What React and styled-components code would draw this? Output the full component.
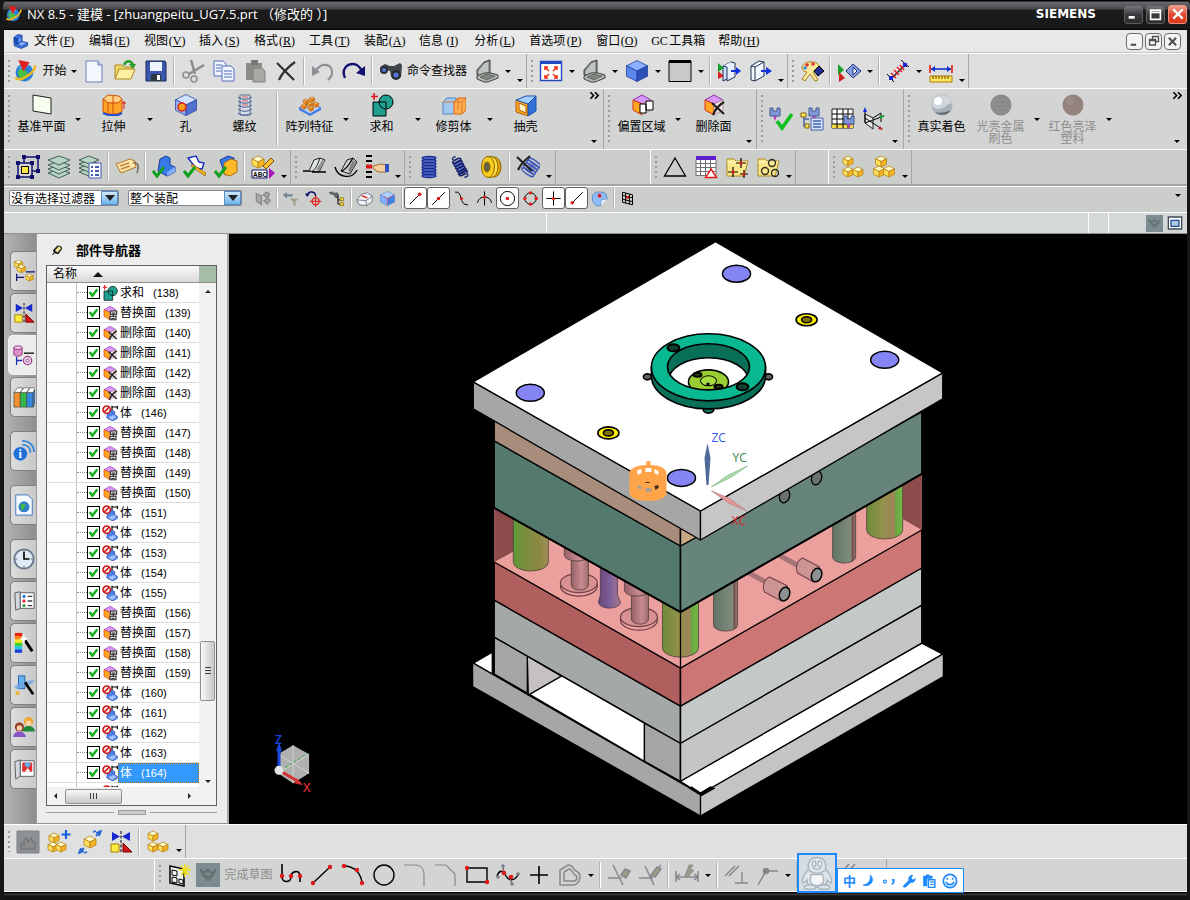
import { useState } from 'react'
import styled, { createGlobalStyle } from 'styled-components'

const C = {
  black:'#000000', frame:'#161616', menu:'#e8e8e8', bar:'#dedede', barMid:'#d3d4d4', barLow:'#cccecc',
  line:'#a6a6a6', light:'#ffffff', muted:'#8e8e8e', panel:'#ececec', select:'#3399ff', blue:'#1e88ff',
  red:'#e01818', navy:'#10106e',
}

const GlobalStyle = createGlobalStyle`
  * { box-sizing:border-box; }
  body { margin:0; background:${C.black}; }
  button, select, input { font:inherit; color:inherit; }
`

const Window = styled.div`
  height:100vh; min-height:640px; display:flex; flex-direction:column; position:relative; overflow:hidden;
  padding:0 3px 0 4px; background:${C.frame};
  font:12px/16px 'Liberation Sans','Noto Sans CJK SC',sans-serif; color:${C.black};
`

/* ---------- title and menu ---------- */

const TitleBar = styled.header`
  height:30px; flex:none; display:flex; align-items:center; gap:4px; padding:0 1px 2px 2px; margin:0 -3px 0 -1px;
  background:linear-gradient(#000 0 1px, #6a6a6e 2px, #48484c 9px, #1c1c1c 10px, #181818 28px, #000 30px);
  color:${C.light}; border-radius:6px 6px 0 0;
`
const Title = styled.h1`
  margin:0; flex:1; font:13px/18px 'Open Sans','Noto Sans CJK SC',sans-serif; white-space:pre;
`
const Brand = styled.div`
  font:700 12px/16px 'DejaVu Sans',sans-serif; margin-right:24px;
`
const WinButton = styled.button`
  width:19px; height:19px; padding:0; display:grid; place-items:center; margin-right:-1px;
  border:1px solid ${p => p.$close ? '#f09080' : '#5c5c60'}; border-radius:3px;
  background:${p => p.$close ? 'linear-gradient(#f0a090,#e04a30 50%,#d83818)' : 'linear-gradient(#77777b,#3c3c40 50%,#2c2c2e)'};
`
const WinButtons = styled.div`display:flex; gap:4px; padding-right:3px;`

const MenuBar = styled.nav`
  height:23px; flex:none; display:flex; align-items:center; gap:13px; padding:0 6px 0 8px; background:${C.menu};
  border-bottom:1px solid #c4c4c4;
`
const MenuItem = styled.button`
  border:0; background:none; padding:0; white-space:pre; line-height:16px;
`
const Mnemonic = styled.span`
  display:inline-block; width:18px; text-align:center; font-family:'Liberation Serif',serif;
`
const MenuLogo = styled.span`display:flex; align-items:center; margin-right:-8px;`
const MdiButtons = styled.div`display:flex; gap:2px; margin-left:auto;`
const MdiButton = styled.button`
  width:17px; height:17px; padding:0; display:grid; place-items:center;
  border:1px solid #6c6c6c; border-radius:4px; background:#f4f4f4;
`

/* ---------- toolbars ---------- */

const Bar = styled.div`
  height:${p => p.$h}px; flex:none; display:${p => p.$cols ? 'grid' : 'flex'}; grid-template-columns:${p => p.$cols};
  background:${p => p.$bg}; border-top:1px solid ${C.light};
  border-bottom:${p => p.$rule ? '2px solid #a4a4a4' : '0'};
`
const Group = styled.div`
  display:flex; align-items:stretch; position:relative; min-width:0; margin-left:${p => p.$gap || 0}px;
  border-right:1px solid ${p => p.$open ? 'transparent' : C.line};
  border-left:${p => p.$gap ? '1px solid #fff' : '0'};
`
const Grip = styled.i`
  width:8px; flex:none; margin:6px 0;
  background:repeating-linear-gradient(#9c9c9c 0 2px, transparent 2px 5px) 4px 0 / 2px 100% no-repeat;
`
const Sep = styled.i`
  width:6px; flex:none; margin:3px 0;
  background:linear-gradient(90deg, #b4b4b4 0 1px, #fff 1px 3px) 2px 0 / 2px 100% no-repeat;
`
const Tool = styled.button`
  width:${p => p.$w || 31}px; flex:none; padding:0; border:0; background:none;
  display:flex; align-items:center; justify-content:center; gap:4px; white-space:nowrap;
  color:${p => p.disabled ? C.muted : C.black};
`
const BigTool = styled.button`
  width:59px; flex:none; padding:4px 0 0; border:0; background:none;
  display:flex; flex-direction:column; align-items:center; gap:4px; line-height:12px;
  color:${p => p.disabled ? C.muted : C.black};
`
const BigLabel = styled.span`width:50px; text-align:center;`
const Caret = styled.button`
  width:${p => p.$w || 12}px; flex:none; padding:${p => p.$low ? '0 0 6px' : '0'}; border:0; background:none;
  display:flex; align-items:${p => p.$low ? 'flex-end' : 'center'}; justify-content:center;
  &::after { content:''; border:3px solid transparent; border-top-color:#000; border-bottom:0; }
`
const Overflow = styled.div`
  width:18px; margin-left:auto; display:flex; flex-direction:column; justify-content:space-between; align-items:center;
  padding-top:1px;
`

const FilterBar = styled(Bar)`align-items:center; padding:0 0 3px 5px;`
const Toggle = styled.button`
  width:23px; height:22px; flex:none; padding:0; display:grid; place-items:center;
  border:1px solid ${p => p.$on ? '#606060' : 'transparent'}; border-radius:3px;
  background:${p => p.$on ? '#fff' : 'none'};
`
const FilterSep = styled(Sep)`width:5px; height:21px; margin:0;`
const SelectBox = styled.label`
  display:grid; grid-template-columns:1fr 17px; width:${p => p.$w}px; height:16px; margin-right:9px;
  border:1px solid #7c8694; border-radius:2px; background:#fff;
`
const Select = styled.select`
  grid-area:1 / 1 / 2 / 3; min-width:0; appearance:none; border:0; background:none; padding:0 17px 0 1px;
  font:12px/14px 'Noto Sans CJK SC',sans-serif; overflow:hidden;
`
const SelectArrow = styled.span`
  grid-area:1 / 2; display:grid; place-items:center; pointer-events:none;
  background:linear-gradient(#cfe8fb,#6cb4ee); border:1px solid #5c8cc0;
  &::after { content:''; border:5px solid transparent; border-top:6px solid #222; border-bottom:0; }
`
const CueLine = styled.div`
  height:22px; flex:none; display:flex; align-items:stretch; background:#d4d8d8;
  border-top:1px solid #fff; border-bottom:1px solid #909090;
`
const Cue = styled.div`flex:${p => p.$flex}; border-right:1px solid #fff;`
const CueIcons = styled.div`width:78px; display:flex; align-items:center; justify-content:flex-end; gap:4px; padding-right:4px;`

/* ---------- work area ---------- */

const Main = styled.main`flex:1; min-height:0; display:flex; background:#000;`
const Resources = styled.aside`
  width:33px; flex:none; padding-top:17px; display:flex; flex-direction:column; align-items:flex-end; gap:2px;
  background:linear-gradient(90deg,#b4b4b4,#8e8e8e); overflow:hidden; border-right:1px solid #999;
`
const ResourceTab = styled.button`
  width:${p => p.$active ? 29 : 27}px; height:40px; flex:none; padding:0; display:grid; place-items:center;
  margin-top:${p => p.$first ? 12 : 0}px; margin-right:-1px;
  border:1px solid ${p => p.$active ? '#f4f4f4' : '#808080'}; border-right:0; border-radius:5px 0 0 5px;
  background:${p => p.$active ? '#ececec' : 'linear-gradient(90deg,#dcdcdc,#c8c8c8)'};
`
const Navigator = styled.section`
  width:192px; flex:none; display:flex; flex-direction:column; background:${C.panel};
  padding:0 10px 8px 9px; border-right:2px solid #a8a8a8; border-bottom:1px solid #909090;
`
const NavTitle = styled.h2`
  margin:0; height:31px; flex:none; display:flex; align-items:center; gap:13px; padding-left:5px;
  font:700 13px/16px 'Noto Sans CJK SC',sans-serif;
`
const TreeBox = styled.div`
  flex:1; min-height:0; display:grid; grid-template:17px minmax(0, 1fr) 18px / minmax(0, 1fr) 17px;
  border:1px solid #606060; background:#fff;
`
const TreeHead = styled.div`
  display:flex; align-items:center; gap:16px; padding-left:6px; background:linear-gradient(#fafafa,#d8d8d8);
  border-bottom:1px solid #909090;
`
const SortArrow = styled.i`border:5px solid transparent; border-bottom-color:#111; border-top:0;`
const HeadCorner = styled.div`background:#a6bca6; border-bottom:1px solid #909090;`
const Rows = styled.ul`
  margin:0; padding:0; list-style:none; overflow:hidden;
  background:linear-gradient(90deg, transparent 29px, #c0c0c0 29px 30px, transparent 30px);
`
const Row = styled.li`
  height:20px; display:flex; align-items:center; padding-left:30px; border-bottom:1px solid #dcdcdc;
`
const LastRow = styled(Row)`padding-left:55px;`
const Stub = styled.i`width:10px; border-top:1px dotted #909090;`
const RowLabel = styled.label`flex:1; display:flex; align-items:center; gap:2px; min-width:0;`
const CheckCell = styled.span`
  display:grid; width:13px; height:13px;
  > * { grid-area:1 / 1; }
  > svg { pointer-events:none; }
`
const Check = styled.input`
  appearance:none; margin:0; width:13px; height:13px; border:1px solid #000; background:#fff;
`
const RowText = styled.span`
  flex:1; display:flex; align-items:center; height:20px; padding-left:2px; margin-left:-2px; white-space:pre;
  color:${p => p.$on ? '#fff' : '#000'}; background:${p => p.$on ? C.select : 'none'};
  outline:${p => p.$on ? '1px dotted #c07010' : '0'}; outline-offset:-1px;
`
const RowNumber = styled.span`font-size:11px; margin-left:9px;`
const VScroll = styled.div`
  background:#f2f2f2; display:flex; flex-direction:column; align-items:center; padding:7px 0 4px;
`
const HScroll = styled.div`
  grid-column:1 / 3; background:#f2f2f2; display:flex; align-items:center; padding:0 25px 0 7px;
`
const Arrow = styled.i`
  border:3px solid transparent;
  ${p => ({
    up:'border-bottom-color:#222; border-top:0;',
    down:'border-top-color:#222; border-bottom:0;',
    left:'border-right-color:#222; border-left:0;',
    right:'border-left-color:#222; border-right:0;',
  }[p.$to])}
`
const Thumb = styled.div`
  border:1px solid #909090; border-radius:2px; display:grid; place-items:center; flex:none;
  background:linear-gradient(${p => p.$v ? '90deg,' : ''}#f8f8f8,#c8c8c8);
  width:${p => p.$v ? 15 : 57}px; height:${p => p.$v ? 60 : 15}px;
  &::after {
    content:''; width:${p => p.$v ? 6 : 8}px; height:${p => p.$v ? 8 : 6}px;
    background:repeating-linear-gradient(${p => p.$v ? '180deg' : '90deg'}, #404040 0 1px, transparent 1px 3px);
  }
`
const Space = styled.i`flex:${p => p.$n};`
const Splitter = styled.div`
  flex:none; height:9px; display:flex; align-items:flex-end; gap:4px;
  &::before, &::after { content:''; flex:3; border-bottom:1px solid #a0a0a0; margin-bottom:2px; }
`
const SplitterKnob = styled.i`width:28px; height:5px; background:#ccc; border:1px solid #999;`
const Viewport = styled.section`flex:1; min-width:0; background:#000; display:flex;`
const Scene = styled.svg`width:100%; height:100%; display:block;`

const Ime = styled.div`
  position:absolute; left:797px; bottom:7px; display:flex; align-items:flex-end; color:${C.blue};
`
const ImeAvatar = styled.div`
  width:40px; height:40px; border:2px solid ${C.blue}; background:#d6dde2; display:grid; place-items:center;
`
const ImeBar = styled.div`
  width:127px; height:25px; border:1px solid ${C.blue}; background:#fff;
  display:flex; align-items:center; justify-content:space-around; padding:0 2px;
  font:700 13px/16px 'Noto Sans CJK SC',sans-serif;
`

/* ---------- icons, all on a 24 x 24 grid ---------- */

const Cube = ({ x, y, s, c = ['#fffbc8', '#ffe05c', '#f4b424'], line = '#b88418' }) => (
  <g stroke={line} strokeWidth="0.8" strokeLinejoin="round">
    <path fill={c[0]} d={`M${x} ${y}l${s} ${s / 2}l${-s} ${s / 2}l${-s} ${-s / 2}z`} />
    <path fill={c[1]} d={`M${x - s} ${y + s / 2}l${s} ${s / 2}v${s}l${-s} ${-s / 2}z`} />
    <path fill={c[2]} d={`M${x + s} ${y + s / 2}l${-s} ${s / 2}v${s}l${s} ${-s / 2}z`} />
  </g>
)

const Dots = ({ at, r = 1.8, fill = C.red }) => at.map(([x, y]) => <circle key={`${x}-${y}`} cx={x} cy={y} r={r} fill={fill} />)
const Tick = <path d="M1 16l4 5 7-9" fill="none" stroke="#10a020" strokeWidth="3" />
const Laptop = (
  <g stroke="#404440" strokeLinejoin="round">
    <path d="M2 16V11l7-8 6-2v13l-7 4z" fill="#a8aca8" />
    <path d="M9 4l5-2v11l-6 3-5 0v-4z" fill="#c0c4c0" strokeWidth="0.600" />
    <path d="M2 17l7-3h7l7 2v3l-10 4H9l-7-3z" fill="#b4b6b4" />
    <path d="M5 18l6-3 9 2-8 4z" fill="#80847f" strokeWidth="0.500" />
  </g>
)
const FaceBox = (
  <g strokeLinejoin="round">
    <path d="M3 7l9-5 9 5-9 4z" fill="#d898f8" stroke="#9030b0" />
    <path d="M3 7l9 4v11l-9-5z" fill="#ffa820" stroke="#e03018" />
    <path d="M21 7l-9 4v11l9-5z" fill="#f4e8e0" stroke="#b890a0" />
  </g>
)
const Books = ['#f09030', '#30b848', '#3888e0']
const Globe = (
  <g>
    <circle cx="11" cy="13" r="8.5" fill="#2a80d8" /><path d="M5 11c4-4 6 0 8 1s1 6-3 8c-4-1-6-5-5-9z" fill="#48c048" />
    <path d="M6 9c2-3 6-4 9-2-3 0-6 1-9 2z" fill="#b8e4ff" />
    <path d="M2 18c6 5 20-6 19-12" fill="none" stroke="#f0b820" strokeWidth="2.4" />
    <path d="M5 1l11 2-6 9z" fill="#e02020" />
  </g>
)
const Folder = (
  <g stroke="#b08820" strokeLinejoin="round">
    <path d="M2 20V6h7l2 2h8v3" fill="#f0d868" /><path d="M2 20l4-10h16l-4 10z" fill="#fff0a0" />
  </g>
)
const PinFolder = (
  <g stroke="#b08820" strokeLinejoin="round">
    <path d="M2 21V4h7l2 2h12l-4 15z" fill="#fbe88c" /><path d="M2 7h20" stroke="#fff8c8" />
  </g>
)
const Mirror = (
  <g>
    <path d="M3 2v9l8-4.500zM21 2v9l-8-4.500z" fill="#1828d0" /><path d="M12 1v22" stroke="#000" strokeDasharray="3 1.500" />
    <path d="M2 14h8v8H2z" fill="#ffec40" stroke="#a08000" /><path d="M14 13l9 9h-9z" fill="#d81818" stroke="#700" />
  </g>
)
const Gray = ({ children }) => <g opacity="0.55" fill="none" stroke="#504850" strokeWidth="1.500">{children}</g>
const Line = ({ d, c = '#000', w = 1.4 }) => <path d={d} fill="none" stroke={c} strokeWidth={w} />
const Plug = ({ x, y }) => (
  <g><path d={`M${x} ${y}h3v3h4v-3h3v8h-10z`} fill="#8098d8" stroke="#405890" /><path d={`M${x + 3} ${y + 8}h4l-2 5z`} fill="#b040c0" /></g>
)

const ICONS = {
  nx: Globe,
  part: <g stroke="#123c98" strokeLinejoin="round"><path d="M3 6l5-4 6 1v9l8 2v4l-9 4-10-4z" fill="#3c74e0" /><path d="M3 6l5 2v8l-5-2z" fill="#2050b8" /><path d="M8 8l6-4v8l-6 4z" fill="#5c90f4" /><path d="M8 16l6-4 8 2-9 5z" fill="#8cb4ff" /></g>,
  new: <g><path d="M4 2h12l4 4v17H4z" fill="#f4f6ff" stroke="#6880b8" /><path d="M16 2v4h4" fill="#c8d4f0" stroke="#6880b8" /></g>,
  open: <g>{Folder}<path d="M11 6c2-5 7-5 9 0" fill="none" stroke="#28a028" strokeWidth="2.500" /><path d="M16 5h7l-3 5z" fill="#28a028" /></g>,
  save: <g><path d="M2 2h19l1 2v18H2z" fill="#3858b0" stroke="#182858" /><path d="M6 3h12v9H6z" fill="#f0f4ff" /><path d="M7 15h10v7H7z" fill="#303840" /><path d="M13 16h3v5h-3z" fill="#fff" /></g>,
  cut: <Gray><path d="M10 1l4 14M23 6L8 15" strokeWidth="2.500" /><circle cx="5" cy="16" r="3" /><circle cx="13" cy="20" r="3" /></Gray>,
  copy: <g fill="#f0f4ff" stroke="#5070b8"><path d="M2 2h9l3 3v12H2z" /><path d="M10 7h9l3 3v12H10z" /><path d="M4 6h6M4 9h5M4 12h5M12 12h8M12 15h8M12 18h8" /></g>,
  paste: <g><path d="M3 4h16v17H3z" fill="#8c8c88" /><path d="M8 1h7v5H8z" fill="#787874" /><path d="M10 9h9l3 3v11H10z" fill="#a8a8a4" stroke="#80807c" /></g>,
  del: <Line d="M3 4l17 17M21 3C14 8 8 14 5 21" c="#303030" w={2.2} />,
  undo: <g><Line d="M5 12c4-9 17-8 16 2 0 3-2 5-4 7" c="#8c9094" w={2.2} /><path d="M1 7v10l8-4z" fill="#8c9094" /></g>,
  redo: <g><Line d="M3 19C-1 10 5 5 11 5c5 0 8 5 9 8" c={C.navy} w={2.4} /><path d="M23 7v10l-9-3z" fill={C.navy} /></g>,
  find: <g><path d="M1 8l5-3 5 2h4l6-3 2 2-1 12-5 3-5-4-1-5-4-1-3 2z" fill="#404448" /><circle cx="5" cy="11" r="4" fill="#282c34" /><circle cx="17" cy="16" r="5" fill="#282c34" /><circle cx="5" cy="11" r="2" fill="#5878e0" /><circle cx="17" cy="16" r="2.500" fill="#5878e0" /></g>,
  laptop: Laptop,
  fit: <g><path d="M1.500 2.500h21v19h-21z" fill="#fff" stroke="#2048c0" strokeWidth="1.400" /><path d="M1 2h22v3H1z" fill="#2048c0" /><Line d="M6 11V8h3M6 8l4 4M18 11V8h-3M18 8l-4 4M6 16v3h3M6 19l4-4M18 16v3h-3M18 19l-4-4" c="#f03010" w={1.6} /></g>,
  cube: <Cube x={12} y={1.5} s={10.5} c={['#8cb0ff', '#5c88ec', '#2c50b8']} line="#2040a0" />,
  pane: <g><path d="M1 2h22v20.500H1z" fill="#c8cac8" stroke="#000" /><path d="M1 1h22v3H1z" fill="#000" /></g>,
  clipWork: <g><path d="M6 7l8-4v15l-8 4z" fill="#c8e0ff" stroke="#203050" /><path d="M6 7l4 1v14l8-4V4l-4-1" fill="#e8f0ff" stroke="#203050" /><Line d="M14 12h6" c="#1030e0" w={2} /><path d="M19 8l5 4-5 4z" fill="#1030e0" /><path d="M1 4l6 5-6 4z" fill="#18a030" /><path d="M1 12l6 5-6 3z" fill="#d02020" /></g>,
  clip: <g><path d="M3 7l8-5 5 1v14l-9 5-4-1z" fill="#f4f8ff" stroke="#203050" /><path d="M7 8l9-5M7 8v14M3 7l4 1" fill="none" stroke="#203050" /><Line d="M13 12h6" c="#1030e0" w={2} /><path d="M18 8l6 4-6 4z" fill="#1030e0" /></g>,
  palette: <g><path d="M2 9C2 2 17 0 20 8c1 4-5 4-7 5l5 8-3 1-5-7-5 7-3-2 5-7c-3 0-5-2-5-4z" fill="#fce89c" stroke="#a88020" /><Dots at={[[7, 6], [13, 5]]} fill="#e03030" /><Dots at={[[5, 9]]} fill="#3090e0" /><path d="M19 7l5 5-6 5-4-5z" fill="#203090" stroke="#000" /></g>,
  showHide: <g><path d="M1 5l6 6-6 5z" fill="#18a030" /><path d="M2 13l6 6-6 4z" fill="#d02020" /><path d="M16 5l8 7-8 7-7-7z" fill="#88a0e0" stroke="#203080" /><path d="M16 8l4 4-4 4z" fill="#fff" stroke="#203080" /></g>,
  measure: <g><Line d="M6 19L19 6" c="#202020" /><Line d="M8 11l5 5M11 8l5 5M14 6l4 5M5 14l5 5" c="#e01818" /><path d="M15 1l8 7M1 15l7 8" stroke="#000" /><path d="M17 4h4v4h-4zM3 17h4v4H3z" fill="#1828d0" /></g>,
  ruler: <g><Line d="M1 6v8M23 6v8" c="#e01818" w={1.6} /><Line d="M2 10h20" c="#1030d0" w={1.6} /><path d="M2 10l4-3v6zM22 10l-4-3v6z" fill="#1030d0" /><path d="M1 17h22v6H1z" fill="#ffe860" stroke="#b07800" /><path d="M4 17v3M7 17v3M10 17v3M13 17v3M16 17v3M19 17v3" stroke="#604000" /></g>,

  datum: <path d="M3 2l18 3v16L3 18z" fill="#f8fff0" stroke="#202020" />,
  extrude: <g stroke="#d05008"><path d="M1 6l5-4 11 1 3 3-4 4H6z" fill="#ffd080" /><path d="M1 6l5 4h10l4-4v13l-5 2H6l-5-2z" fill="#ffa428" /><path d="M1 20l5 2h10l4-2" fill="none" stroke="#2050d0" strokeWidth="2" /><path d="M6 10v11M11 3v17" /><path d="M22 8v8M20 10h4" stroke="#e01010" /></g>,
  hole: <g><Cube x={12} y={1.5} s={10.5} c={['#d0e0ff', '#98b0f8', '#5070d0']} line="#3048a0" /><circle cx="8" cy="14" r="4" fill="#ffa020" stroke="#e02010" strokeWidth="1.500" /></g>,
  thread: <g><path d="M7 2h10v20H7z" fill="#d8dce4" stroke="#607090" /><path d="M5 4c4 3 10 3 14 0M5 8c4 3 10 3 14 0M5 12c4 3 10 3 14 0M5 16c4 3 10 3 14 0M5 20c4 3 10 3 14 0" fill="none" stroke="#405898" /><path d="M9 4h6M9 8h6M9 12h6" stroke="#d06060" /></g>,
  pattern: <g><path d="M1 15l11-5 11 5-11 6z" fill="#b8d4ff" stroke="#3060d0" /><path d="M1 15v2l11 6 11-6v-2l-11 6z" fill="#4080e8" />{[[8, 6], [14, 4], [6, 11], [12, 9], [18, 9], [13, 13]].map(([x, y]) => <Cube key={`${x}${y}`} x={x} y={y} s={2.6} c={['#ffd080', '#ffa430', '#e08018']} line="#c87018" />)}</g>,
  unite: <g><path d="M3 9h13v14H3z" fill="#20a090" stroke="#000" /><circle cx="16" cy="9" r="7" fill="#20a090" stroke="#000" /><path d="M9 9h7v7" fill="none" stroke="#000" /><Line d="M4 0v7M1 3.500h7" c="#e01818" w={1.6} /></g>,
  trim: <g><path d="M1 9l4-4h9v13l-3 3H1z" fill="#a0c8f0" stroke="#5080c0" /><path d="M12 9l4-4h8v12l-4 4h-8z" fill="#ffb050" stroke="#e06010" /><path d="M1 9h19v12M20 9l4-4M16 5v12" fill="none" stroke="#e07830" /></g>,
  shell: <g stroke="#b06008"><path d="M2 7l12 4v12L2 19z" fill="#ffa820" /><path d="M2 7l10-4 10 0-8 8z" fill="#a0d0ff" stroke="#2050a8" /><path d="M14 11l8-8v15l-8 5z" fill="#3070d8" stroke="#2050a8" /><path d="M5 10l7 3v7l-7-3z" fill="#fff0c0" /></g>,
  offset: <g>{FaceBox}<path d="M10 11h6v9h-6zM16 8h7v9h-7z" fill="#fff" stroke="#000" /></g>,
  delFace: <g>{FaceBox}<Line d="M10 10l12 11M22 9C17 12 13 17 11 22" c="#202020" w={2.2} /></g>,
  replace: <g>{FaceBox}<path d="M13 9h9v5h-9zM12 17h9v5h-9z" fill="#fff" stroke="#202020" strokeWidth="1.600" /><Line d="M15 12h5M14 20h5M17 14v3" w={1.4} /></g>,
  body: <g><path d="M9 12l6-4 4 2v5l4 2v3l-7 4-9-5z" fill="#4c80e8" stroke="#1838a0" /><path d="M9 18l9-3 4 3-7 5z" fill="#a0c0ff" /><Line d="M15 1v7M23 1v5M15 3h8" w={1.8} /><circle cx="7" cy="7" r="5.500" fill="#fff" stroke="#d01818" strokeWidth="2.400" /><Line d="M3 11l8-8" c="#d01818" w={2.4} /></g>,
  plugOk: <g><Plug x={1} y={1} /><Line d="M8 14l5 7 10-14" c="#10c020" w={3.6} /></g>,
  plugTree: <g><Plug x={9} y={1} /><path d="M11 11h12v12H11z" fill="#d8e4ff" stroke="#4060a8" /><Line d="M13 14h8M13 17h8M13 20h8M4 9v11M4 12h5M4 19h5" c="#4060a8" /><path d="M1 6h5v4H1zM5 17h4v4H5z" fill="#ffe860" stroke="#806000" /></g>,
  plugTable: <g><path d="M1 2h21v19H1z" fill="#fff" stroke="#202020" /><path d="M1 17h21v4H1z" fill="#f8d840" /><Line d="M1 7h21M1 12h21M1 17h21M6 2v19M12 2v19M17 2v19" w={1} /><g transform="translate(0 -1)"><Plug x={13} y={10} /></g></g>,
  csys: <g><path d="M3 7l8 4v11l-8-6z" fill="#e8e8e8" stroke="#202020" /><Line d="M3 16V2M3 16l19-7M3 11l17 11M11 11l8-5v9" w={1} /><path d="M3 0l-2 5h4z" fill="#1030e0" /><path d="M23 8l-6 1 2 3z" fill="#18a030" /><path d="M21 23l-5-1 2-3z" fill="#d02020" /></g>,
  silver: <g><circle cx="12" cy="12" r="10.500" fill="#a8b0b8" /><path d="M2 12c1-13 18-13 20-2-5 1-8 6-14 6-3 0-5-2-6-4z" fill="#d0d6dc" /><circle cx="8" cy="8" r="4" fill="#fff" /><path d="M5 19c4 4 12 4 16-2-4 2-11 4-16 2z" fill="#606870" /></g>,
  metal: <g><circle cx="12" cy="12" r="10.500" fill="#8c8a88" /><path d="M4 7h16M3 11h18M3 15h18M6 19h12" stroke="#949290" /></g>,
  plastic: <g><circle cx="12" cy="12" r="10.500" fill="#94827f" /><circle cx="9" cy="8" r="4" fill="#9c8c89" /></g>,

  select: <g><path d="M8 2h14v14H8z" fill="none" stroke={C.navy} strokeWidth="1.500" /><path d="M2 8h14v14H2z" fill="#d4d4d4" stroke={C.navy} strokeWidth="1.500" /><path d="M5.500 11.500h7v7h-7z" fill="#ffe840" stroke="#000" /><path d="M6 0h4v4H6zM20 0h4v4h-4zM20 14h4v4h-4zM0 6h4v4H0zM0 20h4v4H0zM14 20h4v4h-4zM14 6h4v4h-4z" fill={C.navy} /></g>,
  layers: <g fill="#b8d4c4" stroke="#406058">{[16, 12, 8, 3].map(y => <path key={y} d={`M1 ${y + 2}l11-4 11 4-11 5z`} />)}</g>,
  layerList: <g><g fill="#b8d4c4" stroke="#406058">{[15, 11, 7, 3].map(y => <path key={y} d={`M1 ${y + 2}l10-4 10 4-10 4z`} />)}</g><path d="M11 8h12v15H11z" fill="#fff" stroke="#4058b8" /><Line d="M13 12h2M13 16h2M13 20h2M17 12h4M17 16h4M17 20h4" c="#4058b8" w={2} /></g>,
  tag: <g><path d="M1 9l14-5 5 2 1 6-15 6z" fill="#fce4a8" stroke="#b07828" /><Line d="M5 11l9-3M6 14l9-3" c="#c08840" /><Line d="M18 8c6-1 6 4 4 10" c="#706050" /></g>,
  asmPart: <g><path d="M8 4l6-3 4 2v7l5 2v5l-8 4-9-5z" fill="#3878e8" stroke="#183c98" /><path d="M15 17l8-5v5l-8 4z" fill="#80b0ff" />{Tick}</g>,
  asmPen: <g><path d="M5 3l8-2 3 6 5 1-2 6-6-1z" fill="#fff" stroke="#2030c0" strokeWidth="1.500" /><path d="M9 9l14 9-1 3-14-10z" fill="#f8b020" stroke="#805000" strokeWidth="0.600" />{Tick}</g>,
  asmBox: <g><path d="M6 5l8-4 6 2-1 14-8 3z" fill="#3878e8" stroke="#183c98" /><path d="M10 8l7-4 6 2v11l-7 4-6-2z" fill="#ffb828" stroke="#b07008" />{Tick}</g>,
  abc: <g><Cube x={7} y={1} s={6} /><path d="M12 11l8-8 3 3-8 8z" fill="#f8c030" stroke="#805000" /><path d="M1 15h15v8H1z" fill="#fff" stroke={C.navy} /><text x="2" y="21.500" fontSize="6.500" fontWeight="700" fontFamily="Liberation Sans">ABC</text><path d="M18 13l6 5-6 6z" fill="#a818b8" /></g>,
  blend: <g><path d="M6 16l5-11 6-2 5 2-6 12z" fill="#e0e4e0" stroke="#202020" /><path d="M6 16c3 2 7-1 11-13" fill="none" stroke="#202020" /><path d="M13 15l6-10 3 1-6 10z" fill="#909490" /><Line d="M0 16h6M9 17h14" /></g>,
  blend2: <g><path d="M7 16l6-11 6-2 4 4-7 12z" fill="#d0d4d0" stroke="#202020" /><path d="M14 15l5-10 3 2-6 11z" fill="#808480" /><Line d="M1 12c3 12 18 12 22 3M7 16c4 0 8-6 12-13" /></g>,
  level: <g><Line d="M1 1h6M1 6h6M1 17h6M1 22h6" w={2} /><Line d="M1 11.500h6" c="#e01818" w={4} /><path d="M8 11l8-2 6 1v7h-9l-5-4z" fill="#f8d0a0" stroke="#a06830" /><path d="M20 9h4v8h-4z" fill="#3050c0" /></g>,
  coil: <g><path d="M5 2h14v20H5z" fill="#6078c8" />{[3, 6, 9, 12, 15, 18, 21].map(y => <ellipse key={y} cx="12" cy={y} rx="7" ry="1.500" fill="none" stroke="#182c98" strokeWidth="1.300" />)}</g>,
  spring: <g transform="rotate(-28 12 12)"><path d="M8 5h8v14H8z" fill="#6078d0" />{[5, 8, 11, 14, 17, 19].map(y => <ellipse key={y} cx="12" cy={y} rx="4.500" ry="1.500" fill="none" stroke="#182068" strokeWidth="1.500" />)}<Line d="M12 4c-5-1-3-5 1-3M12 20c6 1 3 5-1 3" c="#283878" /></g>,
  pulley: <g stroke="#8c6400"><ellipse cx="15" cy="12" rx="7" ry="10" fill="#e0a808" /><ellipse cx="12" cy="12" rx="7" ry="10.500" fill="#ffe040" /><ellipse cx="9" cy="12" rx="6.500" ry="10.500" fill="#f8cc20" /><ellipse cx="8" cy="12" rx="3" ry="5" fill="#606048" /></g>,
  springDel: <g><g transform="rotate(35 14 14)">{[6, 9, 12, 15, 18].map(y => <ellipse key={y} cx="14" cy={y} rx="7" ry="2" fill="none" stroke="#4058b8" strokeWidth="1.500" />)}</g><Line d="M1 2l15 14M14 1C8 6 4 10 2 15" c="#202428" w={2.2} /></g>,
  triangle: <path d="M12 3l10.500 18h-21z" fill="none" stroke="#000" strokeWidth="1.300" />,
  tableTri: <g><path d="M2 2h20v19H2z" fill="#fff" /><path d="M2 1h20v4H2z" fill="#6020d0" /><Line d="M2 8.500h20M2 12.500h20M2 16.500h20M2 20.500h20M6.500 5v16M11.500 5v16M16.500 5v16M2 5v16M22 5v16" c="#707070" w={1} /><path d="M17 14l5.500 8.500h-11z" fill="#fff" stroke="#e01818" strokeWidth="1.400" /></g>,
  folderPt: <g>{PinFolder}<Line d="M16 3v10M11 8h10M8 12v10M3 17h10M19 15v8M15 19h8" w={1.2} /><Dots at={[[16, 8], [8, 17], [19, 19]]} r={1.6} /></g>,
  folderRing: <g>{PinFolder}<g fill="none" stroke="#303020" strokeWidth="1.400"><circle cx="16" cy="8" r="3.500" /><circle cx="9" cy="16" r="3.500" /><circle cx="19" cy="18" r="3.500" /></g></g>,
  boxes: <g><Cube x={7} y={1} s={5} /><Cube x={7} y={12} s={5} /><Cube x={17} y={12} s={5} /></g>,
  boxesAlt: <g><Cube x={9} y={1} s={5.5} /><Cube x={7} y={11} s={5.5} /><Cube x={17} y={11} s={5.5} /></g>,

  chain: <Gray><path d="M3 6l7 3v12l-7-5zM12 8l5-4 4 3-3 5zM13 16l5-4 4 3-4 5z" fill="#888" /></Gray>,
  funnel: <g opacity="0.700"><path d="M1 7l6-4v3h8v3H7v3z" fill="#4c6878" /><path d="M11 12h12l-4 5v6l-3-2v-4z" fill="#8c8c70" /></g>,
  target: <g><Line d="M3 8c2-8 12-6 12 1" c={C.navy} w={2} /><path d="M0 5h7l-4 5z" fill={C.navy} /><circle cx="15" cy="16" r="5" fill="none" stroke="#e01818" strokeWidth="1.800" /><Line d="M15 8v16M7 16h16" c="#e01818" /></g>,
  findTree: <g><path d="M1 3l5-1 3 2 4-1 3 4-2 5-4-1-2-4-5-1z" fill="#606468" /><Line d="M14 9v11M14 14h6M14 20h6" /><path d="M17 11h5v4h-5zM17 18h5v4h-5z" fill="#f8d840" stroke="#806000" /></g>,
  region: <g><path d="M1 14l7-8 8-2 7 5v7l-8 6-10-1z" fill="#f0f2f8" stroke="#505868" /><path d="M1 14l13 1 9-6M14 15l1 7" fill="none" stroke="#505868" /><Line d="M8 8l8 3" c="#e01818" w={2} /></g>,
  ghostCube: <g><Cube x={12} y={2} s={10} c={['#b0d0ff', '#80b0ff', '#4080e8']} line="#5080d0" /><Line d="M12 12v9M12 12l8-4M6 9l6 3" c="#e05050" w={1} /></g>,
  endPt: <g><Line d="M4 20L19 5" /><Dots at={[[18, 6]]} r={2.4} /></g>,
  midPt: <g><Line d="M3 21L21 3" /><Dots at={[[12, 12]]} r={2.4} /></g>,
  ctrlPt: <g><Line d="M3 3c12-2 4 18 18 18" /><Dots at={[[12, 12]]} r={2.2} /></g>,
  crossPt: <g><Line d="M12 2v20M2 18c2-11 18-11 20 0" /><Dots at={[[12, 10]]} r={2.2} /></g>,
  centerPt: <g><circle cx="12" cy="12" r="10" fill="none" stroke="#000" strokeWidth="1.400" /><Dots at={[[12, 12]]} r={2.4} /></g>,
  quadPt: <g><circle cx="12" cy="12" r="8" fill="none" stroke="#000" strokeWidth="1.400" /><Dots at={[[12, 4], [4, 12], [20, 12], [12, 20]]} r={2.4} /></g>,
  existPt: <g><Line d="M12 2v20M2 12h20" /><Dots at={[[12, 12]]} r={2.2} /></g>,
  curvePt: <g><Line d="M4 20L21 3" /><Dots at={[[6, 18]]} r={2.4} /></g>,
  facePt: <g><path d="M2 8c4-7 12-6 19-3l2 8-8 1-1 8c-7 2-13-3-12-14z" fill="#90bcf4" stroke="#4878c0" /><path d="M15 14l8-1-9 9z" fill="#e0eeff" /><Dots at={[[12, 8]]} r={2.6} /></g>,
  gridPt: <g><path d="M4 2l16 4v16L4 18zM9 3v16M15 5v16M4 7l16 4M4 13l16 4" fill="none" stroke="#000" strokeWidth="1.600" /><Dots at={[[12, 10]]} r={2.4} /></g>,
  darkBox: <g><path d="M0 0h24v24H0z" fill="#7c8c90" /><path d="M4 6l4 3 4-3 4 4 4-4-3 7-5 5-5-5zM7 10l5 4 5-4" fill="#6c7878" stroke="#5c6c68" /></g>,
  full: <g><path d="M2 3h20v18H2z" fill="#fff" stroke="#404c58" strokeWidth="2" /><path d="M6 8h12v9H6z" fill="#b0c8e0" stroke="#2050a0" strokeWidth="2" /></g>,

  asmNav: <g><Cube x={6} y={0} s={4.5} /><Cube x={9} y={5} s={4.5} /><Cube x={18} y={15} s={4} /><Line d="M14 13h10M4 15v8M4 19h8" c={C.navy} /></g>,
  constraint: Mirror,
  partNav: <g><path d="M2 4v7c0 3 9 3 9 0V4" fill="#e090c8" stroke="#883078" /><ellipse cx="6.500" cy="4" rx="4.500" ry="2" fill="#f8c8e8" stroke="#883078" /><Line d="M13 10h11" /><Line d="M5 14v9M5 18h6" c="#2030b0" /><circle cx="17" cy="18" r="4.500" fill="none" stroke="#a03890" strokeWidth="1.400" /><circle cx="17" cy="18" r="1.800" fill="none" stroke="#a03890" /></g>,
  books: <g strokeLinejoin="round">{Books.map((f, i) => <g key={f} fill={f} stroke="#404838" strokeWidth="0.700"><path d={`M${1 + i * 7} 7h7v16h-7z`} /><path d={`M${1 + i * 7} 7l4-5h6l-3 5z`} fill="#fff" />{i === 2 && <path d="M22 7l2-4v15l-2 5z" />}</g>)}</g>,
  info: <g><circle cx="8" cy="15" r="7.500" fill="#2070d8" /><text x="6" y="20" fontSize="13" fontWeight="700" fill="#fff" fontFamily="Liberation Serif">i</text><Line d="M10 5c6 0 9 4 9 9M10 1c9 0 13 6 13 12" c="#3888d8" w={2} /></g>,
  web: <g><path d="M3 1h13l5 5v17H3z" fill="#f8fbff" stroke="#3870b8" /><circle cx="12" cy="14" r="6" fill="#3080c8" /><path d="M8 12c3-3 7-1 5 2s-2 4-4 3z" fill="#40b848" /></g>,
  clock: <g><circle cx="12" cy="12" r="10.500" fill="#dfeaf4" stroke="#68788c" strokeWidth="2" /><Line d="M12 4v8h6" w={1.8} /><path d="M12 2.500v2M12 19.500v2M2.500 12h2M19.500 12h2" stroke="#405060" /></g>,
  roles: <g><path d="M2 3l6-1v18l-5 2z" fill="#d4d8dc" stroke="#505860" /><path d="M8 3h15v17H8z" fill="#fff" stroke="#505860" /><Dots at={[[12, 7]]} fill="#2080e0" /><Dots at={[[12, 12]]} fill="#e03030" /><Dots at={[[12, 17]]} fill="#30a040" /><Line d="M16 7h5M16 12h5M16 17h5" c="#404040" /></g>,
  spectrum: <g>{['#f02010', '#f88010', '#f8e820', '#40d030', '#20c8e0', '#2040e0'].map((f, i) => <rect key={f} x="2" y={1 + i * 3.6} width="8" height="3.700" fill={f} />)}<Line d="M13 9l8 12" w={3.4} /><path d="M12 2l1 4 4 1-4 2-1 4-2-4-3-2 3-1z" fill="#fff" /></g>,
  wizard: <g><path d="M6 2h7v14H6z" fill="#68b0f0" stroke="#2060a8" /><path d="M1 14c8-6 16-8 23-7l-4 4-16 6z" fill="#70a8e0" opacity="0.800" /><Line d="M13 9l9 13" w={3} /><path d="M3 19l4 4M7 19l-4 4" stroke="#f0b020" strokeWidth="1.500" /></g>,
  people: <g><circle cx="17" cy="6" r="5" fill="#f0a830" /><circle cx="17" cy="8" r="3" fill="#fbd8a8" /><path d="M10 17c1-8 13-8 14 0z" fill="#208838" /><circle cx="7" cy="12" r="5" fill="#904028" /><circle cx="7" cy="13" r="3" fill="#fbd0b0" /><path d="M0 23c1-8 13-8 14 0z" fill="#8858c8" /></g>,
  gallery: <g><path d="M2 4l6-2v18l-5 3z" fill="#d4d8dc" stroke="#505860" /><path d="M8 3h15v17H8z" fill="#fff" stroke="#505860" /><path d="M10 5h11v10H10z" fill="#e03030" /><path d="M13 5h6v3l-3 3-3-3z" fill="#60b0f0" /><path d="M13 15l3-4 3 4z" fill="#fff" /></g>,
  pin: <g><path d="M3 22l6-8" stroke="#000" strokeWidth="2" /><path d="M4 12l9-9c6-1 9 2 9 7l-7 10c-6 1-11-2-11-8z" fill="#202020" /><path d="M8 13l8-9 4 5-7 8z" fill="#f0e890" /></g>,

  shade: <g><path d="M1 1h22v22H1z" fill="#8e9298" stroke="#7c8084" /><path d="M5 19v-6l3 1v-5l3-1 1 4 3-4 2 4 2 0v7z" fill="#8a8a88" stroke="#76787c" strokeWidth="1.400" /></g>,
  addPart: <g><Cube x={7} y={3} s={5} /><Cube x={6} y={12} s={5} /><Cube x={14} y={12} s={5} /><Line d="M19 0v9M14.500 4.500h9" c="#1860e0" w={2.2} /></g>,
  movePart: <g><Cube x={12} y={6} s={6} /><Line d="M18 3l5-2-2 5M15 2l3-1M6 21l-5 2 2-5M9 22l-3 1M22 2l-4 4M2 22l4-4" c="#2868d0" w={1.8} /></g>,
  mirrorPart: Mirror,
  sketch: <g><path d="M3 3l14 3v17L3 20z" fill="#f0f4f0" stroke="#000" strokeWidth="1.500" /><path d="M5 7l5 1v5l-5-1zM5 14l5 1v5l-5-1zM12 16l4 1v4l-4-1z" fill="none" stroke="#000" /><Line d="M18 1v13M12 7h12M14 3l8 9M22 3l-8 9" c="#f0e010" w={1.6} /></g>,
  profile: <g><Line d="M3 1v13c0 6 9 6 9 0s9-8 9-1v6" w={1.6} /><Dots at={[[3, 13], [12, 13], [21, 13]]} r={2.2} /></g>,
  line: <g><Line d="M3 20L20 4" w={1.4} /><Dots at={[[3, 20], [20, 4]]} r={2.2} /></g>,
  arc: <g><Line d="M3 3c10 0 17 7 18 17" w={1.4} /><Dots at={[[3, 3], [16, 7], [21, 20]]} r={2.2} /></g>,
  circle: <circle cx="12" cy="12" r="10" fill="none" stroke="#000" strokeWidth="1.400" />,
  fillet: <Gray><path d="M1 2h11c6 0 9 4 9 9v12" strokeWidth="1.200" /></Gray>,
  chamfer: <Gray><path d="M1 2h11l9 9v12" strokeWidth="1.200" /></Gray>,
  rect: <g><path d="M2 5h20v14H2z" fill="none" stroke="#000" strokeWidth="1.400" /><Dots at={[[2, 5], [22, 19]]} r={2.2} /></g>,
  spline: <g><Line d="M1 13c3-8 7-4 9 0s8 6 12-1" w={1.5} /><Line d="M7 3l1 8M14 15l2 6" c="#707070" /><Dots at={[[8, 10], [15, 14]]} r={2.3} /><Dots at={[[7, 3], [16, 21], [22, 11], [2, 14]]} fill="#808080" /></g>,
  point: <Line d="M12 3v18M3 12h18" w={1.6} />,
  offsetCurve: <Gray><path d="M2 22V7l8-5c6 0 5 5 8 6 6 2 5 12-2 14z" /><path d="M6 18V9l5-3c3 0 3 4 6 6 3 1 2 6-1 6z" /></Gray>,
  quickTrim: <Gray><path d="M1 15h14M6 2l10 20" /><path d="M14 12l4-6 5 2-4 7z" fill="#6c6c48" /></Gray>,
  quickExtend: <Gray><path d="M1 15h14M7 3l9 19M23 2L12 15" /><path d="M13 12l6-8 4 2-6 8z" fill="#6c6c48" /></Gray>,
  dimension: <Gray><path d="M1 8v11M23 8v11M1 14h22M5 11l-4 3 4 3M19 11l4 3-4 3" /><path d="M10 13l4-11h4l-3 5h4l-7 8z" fill="#6c6c48" strokeWidth="0.800" /></Gray>,
  parallel: <Gray><path d="M1 13L11 3M5 13L15 3M18 9v11M11 20h13" /></Gray>,
  coincident: <Gray><path d="M3 22L11 8h12" /><circle cx="11" cy="8" r="2.500" fill="#504050" /></Gray>,
  hatch: <Gray><path d="M6 10L14 1M12 10l8-9" /></Gray>,

  min: <path d="M4 15h9v4H4z" fill="#fff" />,
  max: <path d="M3 4h18v17H3zM3 4h18v4H3z" fill="none" stroke="#fff" strokeWidth="3" />,
  close: <Line d="M4 4l16 16M20 4L4 20" c="#fff" w={4} />,
  mdiMin: <path d="M5 16h10v4H5z" fill="#505050" />,
  mdiMax: <path d="M9 8V3h12v10h-5M3 9h12v11H3zM3 11h12" fill="none" stroke="#505050" strokeWidth="2.600" />,
  mdiClose: <Line d="M4 4l16 16M20 4L4 20" c="#505050" w={4.5} />,
  tick: <Line d="M5 11l5 7L19 6" c="#10b020" w={4.5} />,
  chevrons: <Line d="M3 5l7 7-7 7M13 5l7 7-7 7" w={3.4} />,
  penguin: <g fill="#dfe4e8" stroke="#aab6c0"><path d="M12 1c-5 0-7 4-6 8-4 5-5 8-4 10 1 0 2-1 3-2 0 2 1 4 3 5h8c2-1 3-3 3-5 1 1 2 2 3 2 1-2 0-5-4-10 1-4-1-8-6-8z" /><path d="M6 10c4 3 8 3 12 0M9 8c2 2 4 2 6 0" fill="none" /><ellipse cx="10" cy="5.500" rx="1.200" ry="1.800" fill="#fff" /><ellipse cx="14" cy="5.500" rx="1.200" ry="1.800" fill="#fff" /><path d="M8 13c-2 6 1 8 4 8s6-2 4-8z" fill="#f4f6f8" /><ellipse cx="7" cy="22" rx="4" ry="1.500" /><ellipse cx="17" cy="22" rx="4" ry="1.500" /></g>,
  moon: <path d="M14 2c9 8 1 21-12 17 8-1 14-8 12-17z" fill={C.blue} stroke={C.blue} strokeWidth="1.500" />,
  comma: <g fill="none" stroke={C.blue} strokeWidth="2"><circle cx="5" cy="13" r="2.500" /><path d="M17 10h3v4l-3 4" strokeWidth="3" /></g>,
  wrench: <path d="M2 20l9-9c-1-6 3-10 8-9l-3 5 3 3 4-3c1 6-4 9-8 8l-9 8c-3 1-5-1-4-3z" fill={C.blue} />,
  clipboard: <g><path d="M2 3h5V1h6v2h5v5H9v13H2z" fill={C.blue} /><path d="M11 10h11v13H11z" fill="#fff" stroke={C.blue} strokeWidth="2.500" /><path d="M14 14h6M14 18h6" stroke={C.blue} strokeWidth="2" /></g>,
  smile: <g fill="none" stroke={C.blue} strokeWidth="2.500"><circle cx="12" cy="12" r="10" /><path d="M6 13c2 6 10 6 12 0M8 7v3M16 7v3" /></g>,
}

const Icon = ({ name, size = 24 }) => (
  <svg width={size} height={size} viewBox="0 0 24 24" aria-hidden="true">{ICONS[name]}</svg>
)

// '|' separator, 'v' drop-down arrow, '.' arrow at the end of a bar
const Tools = ({ items }) => items.map((item, i) => {
  const key = `${item}-${i}`
  if (item === '|') return <Sep key={key} />
  if (item === 'v' || item === '.') return <Caret key={key} $low={item === '.'} aria-label="更多" />
  return <Tool key={key} aria-label={item}><Icon name={item} /></Tool>
})

const BigTools = ({ items }) => items.map((item, i) => {
  if (item === '|') return <Sep key={i} />
  if (item === 'v') return <Caret key={i} $w={13} aria-label="更多" />
  const [icon, label, off] = item
  return (
    <BigTool key={i} disabled={off}>
      <Icon name={icon} />
      <BigLabel>{label}</BigLabel>
    </BigTool>
  )
})

const MENUS = [
  ['文件', 'F'], ['编辑', 'E'], ['视图', 'V'], ['插入', 'S'], ['格式', 'R'], ['工具', 'T'], ['装配', 'A'],
  ['信息', 'I'], ['分析', 'L'], ['首选项', 'P'], ['窗口', 'O'], ['工具箱'], ['帮助', 'H'],
]

const SNAPS = [
  ['endPt', true], ['midPt', true], ['ctrlPt'], ['crossPt'], ['centerPt', true],
  ['quadPt'], ['existPt', true], ['curvePt', true], ['facePt'],
]

const TABS = [
  ['asmNav'], ['constraint'], ['partNav'], ['books'], ['info', true], ['web', true],
  ['clock', true], ['roles'], ['spectrum'], ['wizard'], ['people'], ['gallery'],
]

const KINDS = { u: ['unite', '求和'], r: ['replace', '替换面'], d: ['delFace', '删除面'], b: ['body', '体'] }
const FEATURES = [
  ['u', 138], ['r', 139], ['d', 140], ['d', 141], ['d', 142], ['d', 143], ['b', 146], ['r', 147], ['r', 148],
  ['r', 149], ['r', 150], ['b', 151], ['b', 152], ['b', 153], ['b', 154], ['b', 155], ['r', 156], ['r', 157],
  ['r', 158], ['r', 159], ['b', 160], ['b', 161], ['b', 162], ['b', 163], ['b', 164],
]

const Pillar = ({ x, y, w, top, fill, ry = 9 }) => (
  <path d={`M${x} ${top}V${y}a${w / 2} ${ry} 0 0 0 ${w} 0V${top}z`} fill={fill} stroke="#4c4038" strokeWidth="0.800" />
)

const MoldBase = () => (
  <g strokeLinejoin="round">
    <defs>
      <linearGradient id="olive"><stop offset="0" stopColor="#6c8c38" /><stop offset="0.450" stopColor="#94904c" /><stop offset="0.750" stopColor="#a08458" /><stop offset="0.820" stopColor="#68a840" /><stop offset="1" stopColor="#78b848" /></linearGradient>
      <linearGradient id="moss"><stop offset="0" stopColor="#5c9c38" /><stop offset="0.350" stopColor="#7c8c3c" /><stop offset="0.750" stopColor="#8c8844" /><stop offset="1" stopColor="#a09058" /></linearGradient>
      <linearGradient id="steel"><stop offset="0" stopColor="#607468" /><stop offset="0.800" stopColor="#808c7c" /><stop offset="0.850" stopColor="#704c48" /><stop offset="1" stopColor="#9c7c78" /></linearGradient>
      <linearGradient id="violet"><stop offset="0" stopColor="#684878" /><stop offset="0.500" stopColor="#7c5c98" /><stop offset="1" stopColor="#a87890" /></linearGradient>
      <linearGradient id="rose"><stop offset="0" stopColor="#986068" /><stop offset="0.600" stopColor="#c88c90" /><stop offset="1" stopColor="#a06c70" /></linearGradient>
    </defs>

    <g stroke="#000" strokeWidth="1.300">
      {/* bottom clamp plate */}
      <path d="M473 663l19-11 0 22zM680 781l241-138 21 11-242 140z" fill="#fff" />
      <path d="M473 663l227 131v21L473 686z" fill="#a6a6a6" stroke="none" />
      <path d="M700 794l242-140v22L700 815z" fill="#c4c4c4" stroke="none" />
      <path d="M473 663l227 131 242-140M700 794v21" fill="none" />
      {/* spacer blocks and the opening between them */}
      <path d="M527 656l117 67v38L527 693z" fill="#fff" />
      <path d="M527 656l34 20-33 19z" fill="#c4c0c4" />
      <path d="M494 637l33 19v37l-33-19zM644 723l36 20v38l-36-20z" fill="#a4a6a4" />
      <path d="M680 743l241-138v38L680 781z" fill="#c4c6c6" />
      {/* support plate */}
      <path d="M494 600l186 106v37L494 637z" fill="#a4a8a6" />
      <path d="M680 706l241-138v37L680 743z" fill="#c4c8c8" />
      {/* moving plate */}
      <path d="M494 500l186 90 241-120v60L680 668 494 562z" fill="#eca09e" stroke="none" />
      <path d="M494 500h20v51l-20 11zM921 470h-19v49l19 11z" fill="#8c4c4c" stroke="none" />
      <path d="M494 562l186 106v38L494 600z" fill="#b05e5e" />
      <path d="M680 668l241-138v38L680 706z" fill="#cc7676" />
    </g>

    <Pillar x={513} y={562} w={35} top={510} fill="url(#moss)" />
    <Pillar x={866} y={530} w={36} top={480} fill="url(#olive)" />
    <Pillar x={832} y={557} w={23} top={500} fill="url(#steel)" ry={6} />
    <Pillar x={713} y={625} w={24} top={570} fill="url(#steel)" ry={6} />
    <path d="M600 545v50l-2 7c1 8 21 8 22 0l-3-7v-50z" fill="url(#violet)" stroke="#4c3850" strokeWidth="0.800" />
    <g fill="#d89090" stroke="#704048" strokeWidth="1.200">
      <ellipse cx="578.500" cy="586" rx="18.500" ry="10" fill="none" /><ellipse cx="578.500" cy="583" rx="18.500" ry="9.500" />
      <ellipse cx="638.500" cy="620" rx="18.500" ry="10" fill="none" /><ellipse cx="638.500" cy="617" rx="18.500" ry="9.500" />
    </g>
    <Pillar x={571} y={585} w={17} top={554} fill="url(#rose)" ry={5} />
    <Pillar x={631} y={619} w={17} top={590} fill="url(#rose)" ry={5} />
    <Pillar x={564} y={555} w={25} top={540} fill="url(#rose)" ry={6} />
    <Pillar x={624} y={590} w={25} top={575} fill="url(#rose)" ry={6} />
    <Pillar x={662} y={648} w={36} top={590} fill="url(#olive)" />

    <g stroke="#704048">
      <path d="M745 571l22 12M778 555l22 12" strokeWidth="5" stroke="#a87478" />
      <path d="M769 577l18 9-6 15-17-9c-3-6 0-13 5-15zM802 558l17 9-6 15-16-9c-3-6 0-13 5-15z" fill="#cc9494" />
      <ellipse cx="784" cy="594" rx="5" ry="7" fill="#8c9090" stroke="#000" strokeWidth="1.500" transform="rotate(20 784 594)" />
      <ellipse cx="816" cy="575" rx="5" ry="7" fill="#8c9090" stroke="#000" strokeWidth="1.500" transform="rotate(20 816 575)" />
    </g>

    <g stroke="#000" strokeWidth="1.300">
      {/* fixed plate with the runner plate over it */}
      <path d="M494 441l186 105v66L494 508z" fill="#547a6e" />
      <path d="M680 546l241-134v62L680 612z" fill="#66847c" />
      <path d="M494 418l186 105v23L494 441z" fill="#a88c7c" />
      <path d="M680 525l20 10-20 11z" fill="#c8a884" />
      <path d="M680 530v176M680 668v113" />
      <path d="M494 508l186 104 241-138" fill="none" strokeWidth="2" />
      <ellipse cx="816" cy="478" rx="5" ry="7" fill="#687070" transform="rotate(18 816 478)" />
      <ellipse cx="784" cy="496" rx="5" ry="7" fill="#687070" transform="rotate(18 784 496)" />
      {/* top clamp plate */}
      <path d="M473 382l227 129v29L473 409z" fill="#a6a6a6" />
      <path d="M700 511l242-138v26L700 540z" fill="#c6c6c6" />
      <path d="M715 242l227 131-242 138-227-129z" fill="#fff" />
    </g>
    <path d="M691 786l9 6 10-6 5 2-14 8-13-8z" fill="#000" />

    <g fill="#8484f4" stroke="#000" strokeWidth="1.500">
      {[[736, 274], [884, 360], [530, 393], [681, 478]].map(([x, y]) => <ellipse key={x} cx={x} cy={y} rx="14" ry="8.500" />)}
    </g>
    {[[806, 320], [608, 433]].map(([x, y]) => (
      <g key={x} stroke="#000" strokeWidth="1.600">
        <ellipse cx={x} cy={y} rx="10.500" ry="6" fill="#fff000" /><ellipse cx={x} cy={y} rx="5" ry="3" fill="#807000" />
      </g>
    ))}

    {/* locating ring and sprue bushing */}
    <g stroke="#000" strokeWidth="1.600">
      <ellipse cx="647" cy="377" rx="4" ry="3" fill="#606060" /><ellipse cx="768" cy="377" rx="4" ry="3" fill="#606060" />
      <path d="M703 406h10v5c-2 3-8 3-10 0z" fill="#087058" />
      <path d="M651 367v9a57 33 0 0 0 114 0v-9z" fill="#087058" />
      <ellipse cx="708" cy="367.500" rx="57" ry="33.500" fill="#08b890" />
      <clipPath id="bore"><ellipse cx="708" cy="367" rx="41" ry="23" /></clipPath>
      <g clipPath="url(#bore)">
        <path d="M660 340h96v60h-96z" fill="#087058" stroke="none" />
        <ellipse cx="708" cy="381" rx="40" ry="23" fill="#fff" />
        <ellipse cx="708" cy="382" rx="20" ry="12" fill="#9acd32" />
        <ellipse cx="708" cy="381" rx="8" ry="5" fill="#a8dc40" strokeWidth="1" /><path d="M706 383h3v3h-3z" fill="#000" stroke="none" />
      </g>
      <ellipse cx="708" cy="367" rx="41" ry="23" fill="none" />
      {[[673, 348], [742, 387]].map(([x, y]) => <ellipse key={x} cx={x} cy={y} rx="6" ry="3.500" fill="#104030" strokeWidth="2" />)}
      <ellipse cx="697" cy="375" rx="4" ry="2" fill="#304010" strokeWidth="2" /><ellipse cx="718" cy="387" rx="4" ry="2" fill="#304010" strokeWidth="2" />
    </g>
  </g>
)

const ModelView = () => (
  <Scene viewBox="229 235 957 588" role="img" aria-label="zhuangpeitu_UG7.5">
    <MoldBase />
    <g fontFamily="Open Sans" fontSize="12">
      <path d="M707 443l3 15-2 27h-2l-2-27z" fill="#506898" />
      <path d="M711 487l15-11 21-10-16 11z" fill="#a8e0a8" stroke="#78a878" strokeWidth="0.600" />
      <path d="M711 491l17 7 18 13-18-8z" fill="#e89898" stroke="#b07070" strokeWidth="0.600" />
      <text x="711" y="442" fill="#3058f0">ZC</text>
      <text x="732" y="462" fill="#388848">YC</text>
      <text x="731" y="525" fill="#d82828">XC</text>
    </g>
    <path d="M646 465v-4h4v4c10 0 16 4 16 8v20c0 5-8 8-18 8s-19-3-19-8v-20c0-4 7-8 17-8z" fill="#ffa448" />
    <path d="M637 470l4-1v4l-4 2zM645 468h6v4h-6zM654 469l4 2v4l-4-2z" fill="#fff" />
    <path d="M637 485l4 1v4l-4-2zM645 488h6v4h-6z" fill="#b0a090" /><path d="M654 486l4-1v3l-3 2zM645 482h4v1h-4z" fill="#402818" />

    <path d="M293 745l16 9v19l-16 10-15-10v-19z" fill="#b0b0b0" />
    <path d="M293 745v38M278 773l31-19M278 754l31 19" stroke="#cfcfcf" />
    <path d="M281 770l27-17" stroke="#40a850" strokeDasharray="3 2" />
    <path d="M279 770v-20" stroke="#1848e0" strokeWidth="3" /><path d="M279 742l3 9h-6z" fill="#1848e0" />
    <path d="M279 770l17 10" stroke="#d83030" strokeWidth="3" /><path d="M303 785l-9-2 3-5z" fill="#d83030" />
    <circle cx="279" cy="770" r="4.500" fill="#e4e4e4" />
    <g fontFamily="Open Sans" fontSize="12" fontWeight="600"><text x="275" y="744" fill="#1848e0">Z</text><text x="303" y="792" fill="#d83030">X</text></g>
  </Scene>
)

const App = () => {
  const [hidden, setHidden] = useState([])
  const toggle = (n) => setHidden((prev) => (prev.includes(n) ? prev.filter((h) => h !== n) : [...prev, n]))

  return (
    <Window>
      <GlobalStyle />
      <TitleBar>
        <Icon name="nx" size={18} />
        <Title>NX 8.5 - 建模 - [zhuangpeitu_UG7.5.prt （修改的 ）]</Title>
        <Brand>SIEMENS</Brand>
        <WinButtons>
          <WinButton aria-label="最小化"><Icon name="min" size={16} /></WinButton>
          <WinButton aria-label="最大化"><Icon name="max" size={13} /></WinButton>
          <WinButton $close aria-label="关闭"><Icon name="close" size={14} /></WinButton>
        </WinButtons>
      </TitleBar>

      <MenuBar>
        <MenuLogo><Icon name="part" size={17} /></MenuLogo>
        {MENUS.map(([label, key]) => (
          <MenuItem key={label}>
            {!key && <Mnemonic>GC </Mnemonic>}{label}{key && <Mnemonic>(<u>{key}</u>)</Mnemonic>}
          </MenuItem>
        ))}
        <MdiButtons>
          <MdiButton aria-label="最小化"><Icon name="mdiMin" size={13} /></MdiButton>
          <MdiButton aria-label="还原"><Icon name="mdiMax" size={12} /></MdiButton>
          <MdiButton aria-label="关闭"><Icon name="mdiClose" size={11} /></MdiButton>
        </MdiButtons>
      </MenuBar>

      <Bar $h={35} $bg={C.bar}>
        <Group>
          <Grip />
          <Tool $w={66}><Icon name="nx" size={25} />开始<Caret as="i" $w={6} /></Tool>
          <Tools items={['new', 'open', 'save', '|', 'cut', 'copy', 'paste', 'del', '|', 'undo', 'redo', '|']} />
          <Tool $w={96}><Icon name="find" />命令查找器</Tool>
          <Tools items={['laptop', 'v', '.']} />
        </Group>
        <Group>
          <Grip />
          <Tools items={['fit', 'v', 'laptop', 'v', 'cube', 'v', 'pane', 'v', '|', 'clipWork', 'clip', '.']} />
        </Group>
        <Group>
          <Grip />
          <Tools items={['palette', '|', 'showHide', 'v', '|', 'measure', 'v', 'ruler', '.']} />
        </Group>
      </Bar>

      <Bar $h={61} $bg={C.barMid} $cols="600px 153px 147px 1fr">
        <Group>
          <Grip />
          <BigTools items={[
            ['datum', '基准平面'], 'v', ['extrude', '拉伸'], 'v', ['hole', '孔'], ['thread', '螺纹'], '|',
            ['pattern', '阵列特征'], 'v', ['unite', '求和'], 'v', ['trim', '修剪体'], 'v', ['shell', '抽壳'],
          ]} />
          <Overflow><Icon name="chevrons" size={11} /><Caret $low aria-label="更多" /></Overflow>
        </Group>
        <Group>
          <Grip />
          <BigTools items={[['offset', '偏置区域'], 'v', ['delFace', '删除面']]} />
          <Caret $low aria-label="更多" />
        </Group>
        <Group>
          <Grip />
          <Tools items={['plugOk', 'plugTree', 'plugTable', 'csys', '.']} />
        </Group>
        <Group $open>
          <Grip />
          <BigTools items={[['silver', '真实着色'], ['metal', '光亮金属刷色', true], 'v', ['plastic', '红色亮泽塑料', true], 'v']} />
          <Overflow><Icon name="chevrons" size={11} /><Caret $low aria-label="更多" /></Overflow>
        </Group>
      </Bar>

      <Bar $h={37} $bg={C.barLow} $rule>
        <Group>
          <Grip />
          <Tools items={['select', 'layers', 'layerList', '|', 'tag', '|', 'asmPart', 'asmPen', 'asmBox', '|', 'abc', '.']} />
        </Group>
        <Group><Grip /><Tools items={['blend', 'blend2', 'level', '.']} /></Group>
        <Group><Grip /><Tools items={['coil', 'spring', 'pulley', '|', 'springDel', '.']} /></Group>
        <Group $gap={94}><Grip /><Tools items={['triangle', 'tableTri', 'folderPt', 'folderRing', '.']} /></Group>
        <Group $gap={32}><Grip /><Tools items={['boxes', 'boxesAlt', '.']} /></Group>
      </Bar>

      <FilterBar $h={26} $bg={C.barLow}>
        <SelectBox $w={110}>
          <Select aria-label="选择过滤器"><option>没有选择过滤器</option></Select><SelectArrow />
        </SelectBox>
        <SelectBox $w={114}>
          <Select aria-label="选择范围"><option>整个装配</option></Select><SelectArrow />
        </SelectBox>
        <Toggle aria-label="chain"><Icon name="chain" size={18} /></Toggle>
        <FilterSep />
        {['funnel', 'target', 'findTree'].map((n) => <Toggle key={n} aria-label={n}><Icon name={n} size={17} /></Toggle>)}
        <FilterSep />
        {['region', 'ghostCube'].map((n) => <Toggle key={n} aria-label={n}><Icon name={n} size={17} /></Toggle>)}
        <FilterSep />
        {SNAPS.map(([n, on]) => <Toggle key={n} $on={on} aria-label={n}><Icon name={n} size={17} /></Toggle>)}
        <FilterSep />
        <Toggle aria-label="gridPt"><Icon name="gridPt" size={15} /></Toggle>
        <Overflow><Caret $low aria-label="更多" /></Overflow>
      </FilterBar>

      <CueLine>
        <Cue $flex="1" /><Cue $flex="1" /><Cue $flex="0 0 20px" />
        <CueIcons><Icon name="darkBox" size={17} /><Icon name="full" size={16} /></CueIcons>
      </CueLine>

      <Main>
        <Resources>
          {TABS.map(([name, first]) => (
            <ResourceTab key={name} $first={first} $active={name === 'partNav'} aria-label={name}><Icon name={name} size={22} /></ResourceTab>
          ))}
        </Resources>

        <Navigator>
          <NavTitle><Icon name="pin" size={12} />部件导航器</NavTitle>
          <TreeBox>
            <TreeHead>名称<SortArrow /></TreeHead>
            <HeadCorner />
            <Rows>
              {FEATURES.map(([kind, n]) => (
                <Row key={n}>
                  <Stub />
                  <RowLabel>
                    <CheckCell>
                      <Check type="checkbox" checked={!hidden.includes(n)} onChange={() => toggle(n)} />
                      {!hidden.includes(n) && <Icon name="tick" size={13} />}
                    </CheckCell>
                    <Icon name={KINDS[kind][0]} size={16} />
                    <RowText $on={n === 164}>{KINDS[kind][1]}<RowNumber>({n})</RowNumber></RowText>
                  </RowLabel>
                </Row>
              ))}
              <LastRow aria-hidden="true"><Icon name="body" size={16} /></LastRow>
            </Rows>
            <VScroll>
              <Arrow $to="up" /><Space $n={345} /><Thumb $v /><Space $n={78} /><Arrow $to="down" />
            </VScroll>
            <HScroll>
              <Arrow $to="left" /><Space $n={1} /><Thumb /><Space $n={8} /><Arrow $to="right" />
            </HScroll>
          </TreeBox>
          <Splitter><SplitterKnob /></Splitter>
        </Navigator>

        <Viewport><ModelView /></Viewport>
      </Main>

      <Bar $h={34} $bg="#e0e0e0">
        <Group>
          <Grip />
          <Tools items={['shade', 'addPart', 'movePart', 'mirrorPart', '|', 'boxes', '.']} />
        </Group>
      </Bar>
      <Bar $h={33} $bg={C.barMid}>
        <Group $gap={150}>
          <Grip />
          <Tools items={['sketch']} />
          <Tool $w={81} disabled><Icon name="darkBox" />完成草图</Tool>
          <Tools items={[
            'profile', 'line', 'arc', 'circle', 'fillet', 'chamfer', 'rect', 'spline', 'point', 'offsetCurve', 'v', '|',
            'quickTrim', 'quickExtend', '|', 'dimension', 'v', '|', 'parallel', 'coincident', 'v', '|', 'hatch', 'hatch', 'v', 'v',
          ]} />
        </Group>
      </Bar>
      <Bar as="footer" $h={9} $bg="linear-gradient(#000 0 1px, #444 2px, #141414 4px)" />

      <Ime>
        <ImeAvatar><Icon name="penguin" size={34} /></ImeAvatar>
        <ImeBar>
          中<Icon name="moon" size={14} /><Icon name="comma" size={14} /><Icon name="wrench" size={14} />
          <Icon name="clipboard" size={14} /><Icon name="smile" size={16} />
        </ImeBar>
      </Ime>
    </Window>
  )
}

export default App
